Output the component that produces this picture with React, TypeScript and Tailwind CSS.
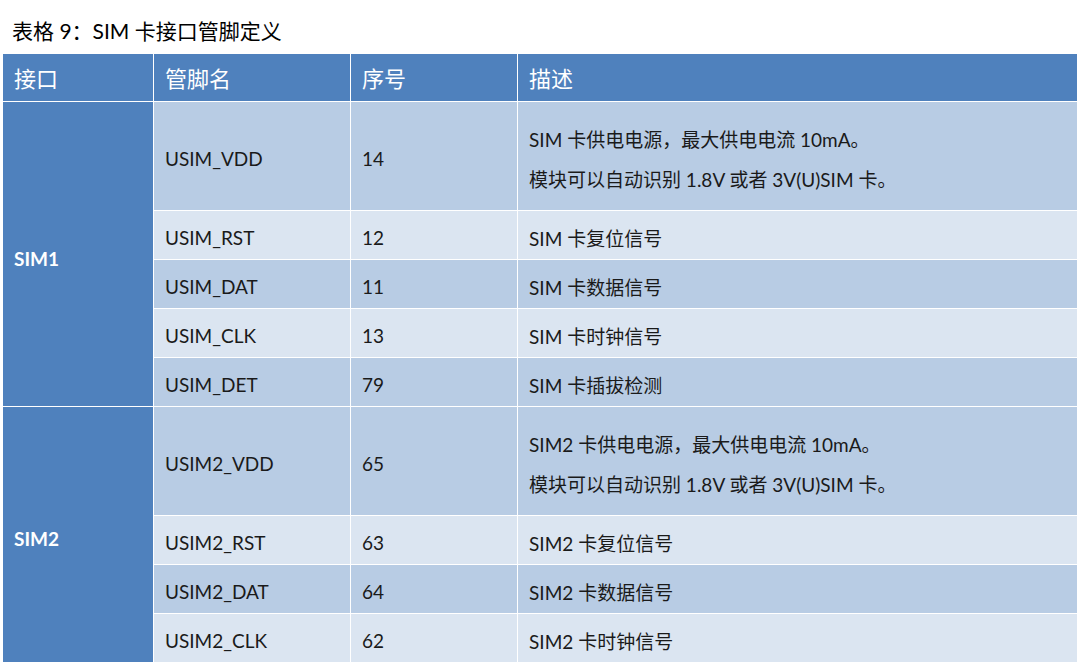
import React from 'react';

interface PinRow {
  name: string;
  no: string;
  desc: string[];
  tall?: boolean;
}

interface PinGroup {
  label: string;
  rows: PinRow[];
}

const groups: PinGroup[] = [
  {
    label: 'SIM1',
    rows: [
      {
        name: 'USIM_VDD',
        no: '14',
        desc: ['SIM 卡供电电源，最大供电电流 10mA。', '模块可以自动识别 1.8V 或者 3V(U)SIM 卡。'],
        tall: true,
      },
      { name: 'USIM_RST', no: '12', desc: ['SIM 卡复位信号'] },
      { name: 'USIM_DAT', no: '11', desc: ['SIM 卡数据信号'] },
      { name: 'USIM_CLK', no: '13', desc: ['SIM 卡时钟信号'] },
      { name: 'USIM_DET', no: '79', desc: ['SIM 卡插拔检测'] },
    ],
  },
  {
    label: 'SIM2',
    rows: [
      {
        name: 'USIM2_VDD',
        no: '65',
        desc: ['SIM2 卡供电电源，最大供电电流 10mA。', '模块可以自动识别 1.8V 或者 3V(U)SIM 卡。'],
        tall: true,
      },
      { name: 'USIM2_RST', no: '63', desc: ['SIM2 卡复位信号'] },
      { name: 'USIM2_DAT', no: '64', desc: ['SIM2 卡数据信号'] },
      { name: 'USIM2_CLK', no: '62', desc: ['SIM2 卡时钟信号'] },
    ],
  },
];

const font = { fontFamily: '"Lato", "Noto Sans CJK SC", sans-serif' };

const App: React.FC = () => {
  return (
    <div className="w-[1080px] h-[662px] bg-white overflow-hidden" style={font}>
      <div className="h-[53px] pl-[12px] pt-[17px] text-[21px] leading-[28px] text-black">
        表格 9：SIM 卡接口管脚定义
      </div>
      <table className="ml-[2px] w-[1076px] border-collapse table-fixed">
        <colgroup>
          <col className="w-[151px]" />
          <col className="w-[197px]" />
          <col className="w-[167px]" />
          <col />
        </colgroup>
        <thead>
          <tr className="h-[48px] bg-[#4f81bd] text-white text-[22px]">
            {['接口', '管脚名', '序号', '描述'].map((h) => (
              <th key={h} className="border border-white px-[11px] pt-[2px] text-left font-normal">
                {h}
              </th>
            ))}
          </tr>
        </thead>
        <tbody className="text-[19px] text-[#1a1a1a]">
          {groups.map((group) =>
            group.rows.map((row, i) => {
              // bands restart with the dark shade in every group
              const bg = i % 2 === 0 ? 'bg-[#b8cce4]' : 'bg-[#dbe5f1]';
              return (
                <tr key={row.name} className={row.tall ? 'h-[109px]' : 'h-[49px]'}>
                  {i === 0 && (
                    <td
                      rowSpan={group.rows.length}
                      className="border border-white bg-[#4f81bd] px-[11px] pt-[10px] text-white font-bold"
                    >
                      {group.label}
                    </td>
                  )}
                  <td className={`border border-white px-[11px] pt-[7px] ${bg}`}>{row.name}</td>
                  <td className={`border border-white px-[11px] pt-[7px] ${bg}`}>{row.no}</td>
                  <td className={`border border-white px-[11px] pt-[7px] ${bg}`}>
                    {row.desc.map((line) => (
                      <div key={line} className="leading-[40px]">
                        {line}
                      </div>
                    ))}
                  </td>
                </tr>
              );
            })
          )}
        </tbody>
      </table>
    </div>
  );
};

export default App;
